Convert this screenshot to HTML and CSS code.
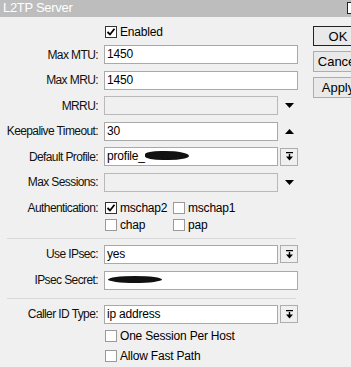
FILE: index.html
```html
<!DOCTYPE html>
<html lang="en">
<head>
  <meta charset="UTF-8" />
  <title>L2TP Server</title>
  <link rel="stylesheet" href="styles.css">
</head>
<body>
  <div class="titlebar">
    <span class="title">L2TP Server</span>
    <span class="tb-box"></span>
  </div>

  <div class="window">
    <div class="form">
      <div class="row first">
        <span class="label"></span>
        <div class="field">
          <span class="check on"><span class="box"><svg width="10" height="10" viewBox="0 0 10 10"><path d="M1.5 5 L4 7.5 L8.5 1.8" fill="none" stroke="#000" stroke-width="1.8"/></svg></span>Enabled</span>
        </div>
      </div>

      <div class="row">
        <span class="label">Max MTU:</span>
        <div class="field"><div class="input">1450</div></div>
      </div>
      <div class="row">
        <span class="label">Max MRU:</span>
        <div class="field"><div class="input">1450</div></div>
      </div>
      <div class="row">
        <span class="label">MRRU:</span>
        <div class="field">
          <div class="input off"></div>
          <span class="side"><svg width="9" height="5" viewBox="0 0 9 5"><path d="M0 0 H9 L4.5 5 Z" fill="#000"/></svg></span>
        </div>
      </div>
      <div class="row">
        <span class="label">Keepalive Timeout:</span>
        <div class="field">
          <div class="input">30</div>
          <span class="side"><svg width="9" height="5" viewBox="0 0 9 5"><path d="M0 5 H9 L4.5 0 Z" fill="#000"/></svg></span>
        </div>
      </div>
      <div class="row">
        <span class="label">Default Profile:</span>
        <div class="field">
          <div class="input">profile_<span class="blot blot-short"></span></div>
          <span class="side btn"><svg width="9" height="9" viewBox="0 0 9 9"><path d="M1 0.5 H8 M4.5 2 V5" stroke="#000" stroke-width="1.4" fill="none"/><path d="M1 4.5 H8 L4.5 8.5 Z" fill="#000"/></svg></span>
        </div>
      </div>
      <div class="row">
        <span class="label">Max Sessions:</span>
        <div class="field">
          <div class="input off"></div>
          <span class="side"><svg width="9" height="5" viewBox="0 0 9 5"><path d="M0 0 H9 L4.5 5 Z" fill="#000"/></svg></span>
        </div>
      </div>

      <div class="row auth">
        <span class="label">Authentication:</span>
        <div class="checks">
          <span class="check on"><span class="box"><svg width="10" height="10" viewBox="0 0 10 10"><path d="M1.5 5 L4 7.5 L8.5 1.8" fill="none" stroke="#000" stroke-width="1.8"/></svg></span>mschap2</span>
          <span class="check"><span class="box"></span>mschap1</span>
          <span class="check"><span class="box"></span>chap</span>
          <span class="check"><span class="box"></span>pap</span>
        </div>
      </div>

      <div class="sep sep-1"></div>

      <div class="row ipsec">
        <span class="label">Use IPsec:</span>
        <div class="field">
          <div class="input">yes</div>
          <span class="side btn"><svg width="9" height="9" viewBox="0 0 9 9"><path d="M1 0.5 H8 M4.5 2 V5" stroke="#000" stroke-width="1.4" fill="none"/><path d="M1 4.5 H8 L4.5 8.5 Z" fill="#000"/></svg></span>
        </div>
      </div>
      <div class="row secret">
        <span class="label">IPsec Secret:</span>
        <div class="field"><div class="input"><span class="blot blot-long"></span></div></div>
      </div>

      <div class="sep sep-2"></div>

      <div class="row caller">
        <span class="label">Caller ID Type:</span>
        <div class="field">
          <div class="input">ip address</div>
          <span class="side btn"><svg width="9" height="9" viewBox="0 0 9 9"><path d="M1 0.5 H8 M4.5 2 V5" stroke="#000" stroke-width="1.4" fill="none"/><path d="M1 4.5 H8 L4.5 8.5 Z" fill="#000"/></svg></span>
        </div>
      </div>
      <div class="row opt opt-1">
        <span class="label"></span>
        <div class="field"><span class="check"><span class="box"></span>One Session Per Host</span></div>
      </div>
      <div class="row opt opt-2">
        <span class="label"></span>
        <div class="field"><span class="check"><span class="box"></span>Allow Fast Path</span></div>
      </div>
    </div>

    <div class="actions">
      <button class="button default">OK</button>
      <button class="button">Cancel</button>
      <button class="button">Apply</button>
    </div>
  </div>
</body>
</html>
```

FILE: styles.css
```css
body {
  margin: 0;
  width: 351px;
  height: 367px;
  overflow: hidden;
  background: #f0f0f0;
  font-family: "Liberation Sans", Arial, sans-serif;
  font-size: 12px;
  letter-spacing: -0.2px;
  color: #000;
}

/* judul jendela */
.titlebar {
  height: 17px;
  background: #bdbdbd;
  display: flex;
  align-items: flex-start;
  padding-left: 3px;
}

.title {
  color: #fff;
  font-size: 13px;
  letter-spacing: -0.3px;
  line-height: 16px;
}

.tb-box {
  margin-left: auto;
  margin-top: 2px;
  margin-right: -8px;
  width: 10px;
  height: 10px;
  background: #fff;
  border: 1px solid #222;
}

.window {
  display: flex;
  align-items: flex-start;
}

.form {
  width: 291px;
  padding: 5px 0 0 7px;
  flex-shrink: 0;
}

.row {
  display: grid;
  grid-template-columns: 91px 194px;
  column-gap: 6px;
  align-items: center;
  height: 19px;
  margin-top: 6.5px;
}

.row.first { margin-top: 0; }
.row.first + .row { margin-top: 4px; }

.label {
  display: flex;
  justify-content: flex-end;
  white-space: nowrap;
  letter-spacing: -0.6px;
  color: #111;
}

.field {
  display: flex;
  align-items: center;
  gap: 2px;
  height: 19px;
}

.input {
  flex: 1;
  height: 19px;
  box-sizing: border-box;
  border: 1px solid #a9a9a9;
  background: #fff;
  padding-left: 2px;
  line-height: 17px;
  white-space: nowrap;
  overflow: hidden;
}

.input.off {
  background: #f0f0f0;
  border-color: #b9b9b9;
}

.side {
  width: 18px;
  height: 18px;
  box-sizing: border-box;
  display: flex;
  align-items: center;
  justify-content: center;
}

.side.btn {
  border: 1px solid #adadad;
  background: #f0f0f0;
}

.blot {
  display: inline-block;
  background: #111;
  vertical-align: middle;
}

.blot-short {
  width: 44px;
  height: 9px;
  border-radius: 40% 60% 50% 45%;
  margin-top: -2px;
}

.blot-long {
  width: 54px;
  height: 7px;
  border-radius: 50%;
  margin-left: 1px;
  margin-top: -2px;
}

/* checkbox */
.check {
  display: inline-flex;
  align-items: center;
  white-space: nowrap;
  height: 17px;
}

.box {
  width: 12px;
  height: 12px;
  box-sizing: border-box;
  border: 1px solid #9a9a9a;
  background: #fff;
  margin: 0 3px 0 1px;
  display: flex;
  align-items: center;
  justify-content: center;
}

.check.on .box {
  border-color: #333;
}

.auth {
  height: 34px;
  align-items: start;
  margin-top: 8px;
}

.auth .label {
  line-height: 17px;
}

.checks {
  display: grid;
  grid-template-columns: 68px auto;
  grid-auto-rows: 17px;
}

.sep {
  height: 0;
  border-top: 1px solid #d9d9d9;
  width: 289px;
}

.sep-1 { margin-top: 4px; }
.sep-2 { margin-top: 8px; }

.row.ipsec { margin-top: 6px; }
.row.secret { margin-top: 7px; }
.row.caller { margin-top: 6px; }
.row.opt-1 { margin-top: 3px; }
.row.opt-2 { margin-top: 0.5px; }

/* tombol */
.actions {
  display: flex;
  flex-direction: column;
  gap: 5px;
  margin-left: 15px;
  padding-top: 9px;
}

.button {
  width: 50px;
  height: 21px;
  padding: 0;
  font-family: inherit;
  font-size: 13px;
  letter-spacing: 0;
  color: #000;
  background: #e9e9e9;
  border: 1px solid #adadad;
  flex-shrink: 0;
}

.button.default {
  border-color: #222;
  height: 20px;
}
```
